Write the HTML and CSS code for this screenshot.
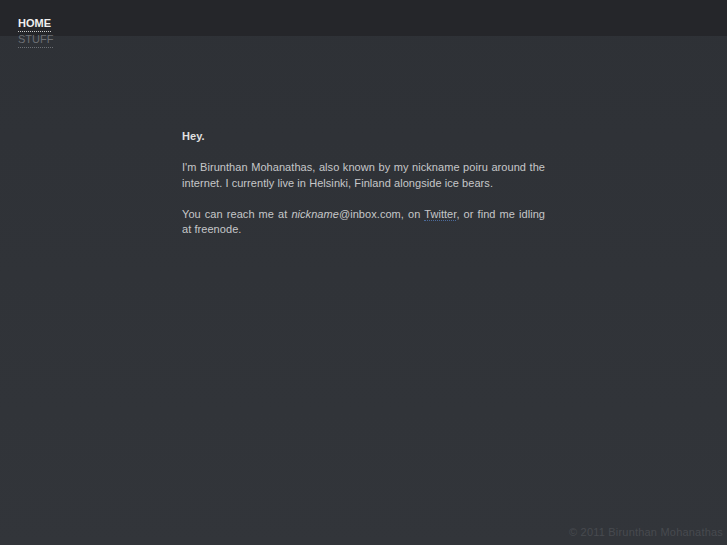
FILE: index.html
```html
<!DOCTYPE html>
<html>
<head>
<meta charset="utf-8">
<title>poiru</title>
<link rel="stylesheet" href="styles.css">
</head>
<body>
<div class="page">
  <header class="topbar">
    <nav class="nav">
      <a class="nav-link active" href="#">Home</a>
      <a class="nav-link" href="#">Stuff</a>
    </nav>
  </header>
  <main class="content">
    <p class="hey">Hey.</p>
    <p>I'm Birunthan Mohanathas, also known by my nickname poiru around the internet. I currently live in Helsinki, Finland alongside ice bears.</p>
    <p>You can reach me at <em>nickname</em>@inbox.com, on <a class="link" href="#">Twitter</a>, or find me idling at freenode.</p>
  </main>
  <footer class="footer">© 2011 Birunthan Mohanathas</footer>
</div>
</body>
</html>
```
FILE: styles.css
```css
html, body {
  margin: 0;
  padding: 0;
  height: 100%;
}
body {
  background: linear-gradient(#2e3136, #32353a);
  font-family: "Liberation Sans", Arial, sans-serif;
  font-size: 11px;
  color: #c6c7c9;
}
.page {
  min-height: 100%;
  display: flex;
  flex-direction: column;
}
.topbar {
  height: 36px;
  background: #25262a;
  position: relative;
}
.nav {
  position: absolute;
  left: 18px;
  top: 17px;
  display: flex;
  flex-direction: column;
  z-index: 2;
}
.nav-link {
  text-transform: uppercase;
  text-decoration: none;
  font-size: 11px;
  line-height: 13px;
  color: #6c6f74;
  border-bottom: 1px dotted #6c6f74;
  padding-bottom: 1px;
  width: max-content;
}
.nav-link + .nav-link {
  margin-top: 1px;
}
.nav-link.active {
  color: #f0f0f0;
  font-weight: bold;
  border-bottom-color: #c8c8c8;
}
.content {
  width: 363px;
  margin: 93px 0 0 182px;
  text-align: justify;
  line-height: 15.5px;
  letter-spacing: 0.06px;
  flex: 1;
}
.content p {
  margin: 0 0 15.5px 0;
}
.hey {
  font-weight: bold;
  color: #e0e0e0;
}
.link {
  color: #c6c7c9;
  text-decoration: none;
  border-bottom: 1px dotted #4c6a9a;
}
.footer {
  text-align: right;
  padding: 0 4px 7px 0;
  color: #474a4f;
  font-size: 11px;
  letter-spacing: 0.2px;
}
```
